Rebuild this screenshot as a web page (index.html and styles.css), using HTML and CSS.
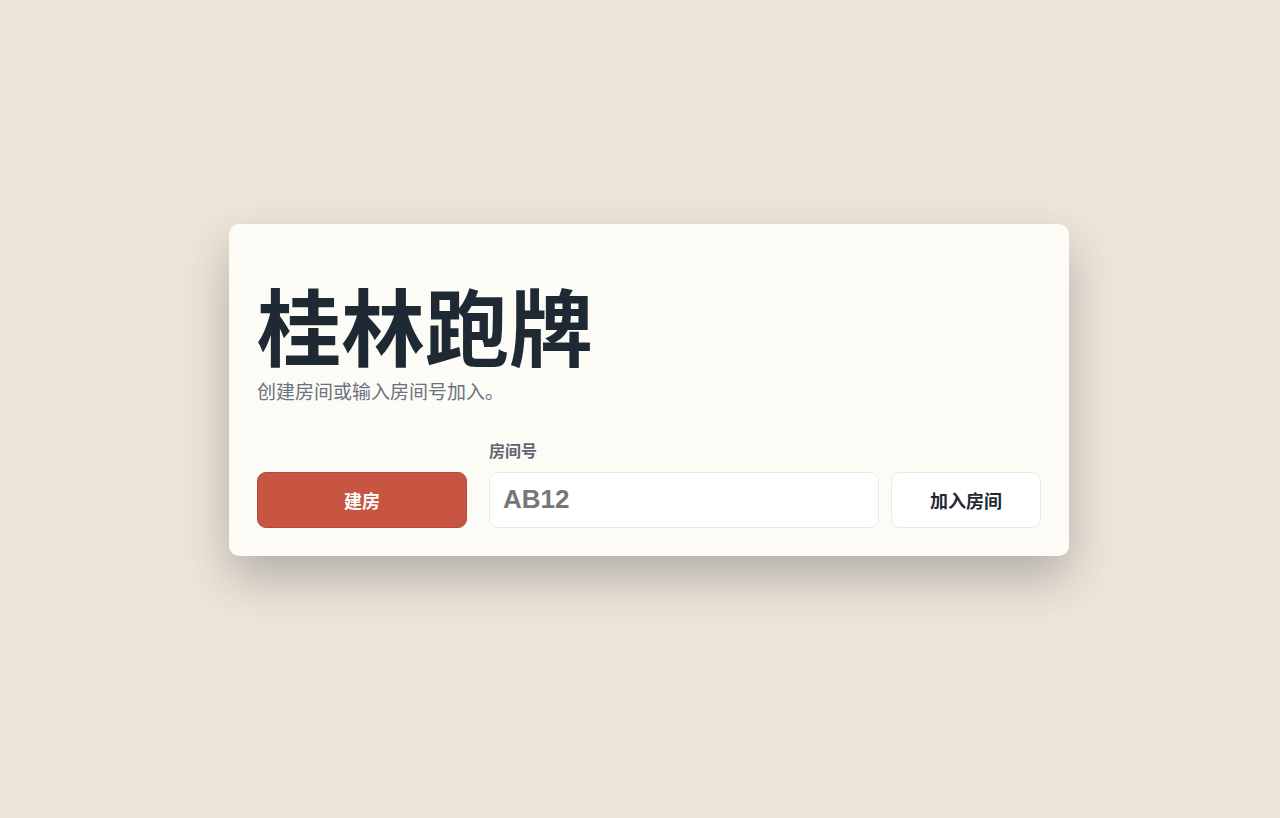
FILE: index.html
```html
<!DOCTYPE html>
<html lang="zh-CN">
<head>
<meta charset="utf-8">
<title>桂林跑牌</title>
<link rel="stylesheet" href="styles.css">
</head>
<body>
<main class="page">
  <section class="card">
    <h1 class="title">桂林跑牌</h1>
    <p class="subtitle">创建房间或输入房间号加入。</p>
    <div class="actions">
      <button class="btn btn-create" type="button">建房</button>
      <div class="join">
        <label class="label" for="room">房间号</label>
        <div class="join-row">
          <input class="room-input" id="room" type="text" placeholder="AB12">
          <button class="btn btn-join" type="button">加入房间</button>
        </div>
      </div>
    </div>
  </section>
</main>
</body>
</html>
```

FILE: styles.css
```css
* { box-sizing: border-box; }
html, body { margin: 0; padding: 0; }
body {
  background: #efe6da;
  font-family: "Liberation Sans", "Noto Sans CJK SC", sans-serif;
  color: #1f2933;
}
.page {
  min-height: 818px;
  display: flex;
  align-items: center;
  justify-content: center;
  padding: 0 0 38px 18px;
}
.card {
  width: 840px;
  background: #fcfbf6;
  border-radius: 10px;
  padding: 28px;
  box-shadow: 0 22px 50px rgba(31, 41, 51, 0.3);
}
.title {
  margin: 30px 0 0;
  font-family: "Noto Sans CJK SC", sans-serif;
  font-size: 84px;
  line-height: 1;
  font-weight: 700;
  color: #1f2933;
}
.subtitle {
  margin: 13px 0 0;
  font-family: "Noto Sans CJK SC", sans-serif;
  font-size: 19px;
  line-height: 1.3;
  color: #6b7280;
}
.actions {
  margin-top: 35px;
  display: flex;
  align-items: flex-end;
  gap: 22px;
}
.btn {
  height: 56px;
  border-radius: 9px;
  font-family: "Noto Sans CJK SC", sans-serif;
  font-size: 18px;
  font-weight: 700;
  cursor: pointer;
}
.btn-create {
  width: 210px;
  flex: none;
  background: #c85542;
  border: 1px solid #b5473a;
  color: #ffffff;
}
.join {
  flex: 1;
  display: flex;
  flex-direction: column;
  gap: 11px;
}
.label {
  font-family: "Noto Sans CJK SC", sans-serif;
  font-size: 16px;
  line-height: 22px;
  font-weight: 700;
  color: #5f6670;
}
.join-row {
  display: flex;
  gap: 12px;
}
.room-input {
  flex: 1;
  min-width: 0;
  height: 56px;
  border: 1px solid #ebe9e4;
  border-radius: 9px;
  background: #ffffff;
  padding: 0 13px;
  font-family: "Liberation Sans", sans-serif;
  font-size: 26px;
  font-weight: 700;
  color: #1f2933;
  outline: none;
}
.room-input::placeholder { color: #777777; opacity: 1; }
.btn-join {
  width: 150px;
  flex: none;
  background: #ffffff;
  border: 1px solid #ebe9e4;
  color: #1f2933;
}
```
